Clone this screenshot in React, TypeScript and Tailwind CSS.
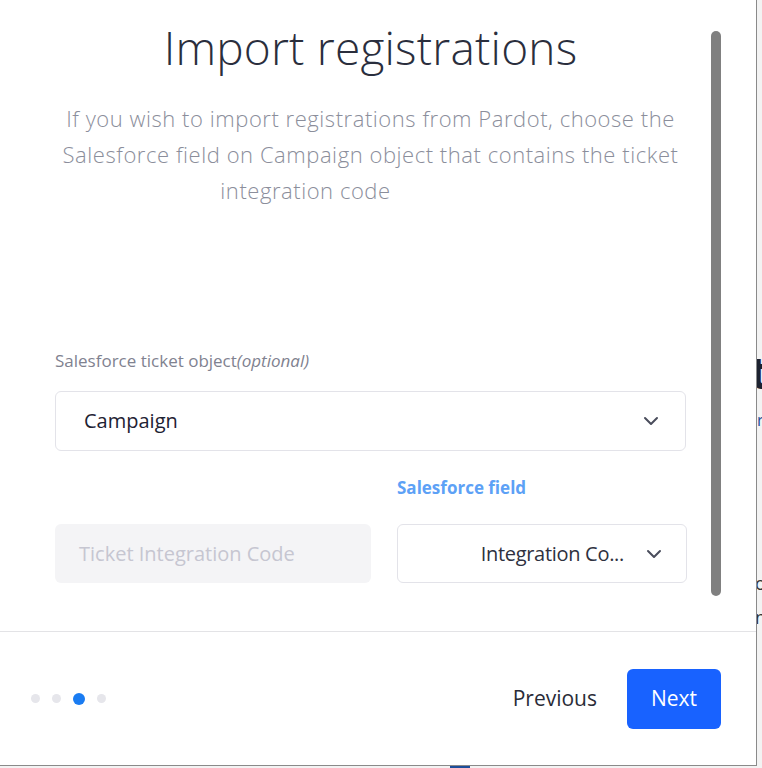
import { ChevronDown } from "lucide-react";

const font = { fontFamily: "'Open Sans', 'Noto Sans', sans-serif" };

function Dots() {
  return (
    <div className="flex items-center gap-[12px] pl-[31px]">
      <span className="h-[9px] w-[9px] rounded-full bg-[#e6e6eb]" />
      <span className="h-[9px] w-[9px] rounded-full bg-[#e6e6eb]" />
      <span className="h-[12px] w-[12px] rounded-full bg-[#1a7cf2]" />
      <span className="h-[9px] w-[9px] rounded-full bg-[#e6e6eb]" />
    </div>
  );
}

export default function App() {
  return (
    <div className="relative h-[768px] w-[762px] overflow-hidden bg-[#f3f3f3]" style={font}>
      {/* page behind the modal */}
      <div className="absolute left-[750px] top-[350px] text-[44px] font-bold leading-none text-[#1d2230]">t</div>
      <div className="absolute left-[757px] top-[412px] text-[16px] leading-none text-[#1d4e9a]">r</div>
      <div className="absolute left-[755px] top-[574px] text-[18px] leading-none text-[#333]">o</div>
      <div className="absolute left-[755px] top-[608px] text-[18px] leading-none text-[#333]">n</div>
      <div className="absolute left-[450px] top-[762px] h-[6px] w-[20px] bg-[#1d4e9a]" />

      <div className="relative flex h-[766px] w-[757px] flex-col border-b border-r border-[#8a8a8a] bg-white">
        {/* body */}
        <div className="relative flex-1 pl-[55px] pr-[70px] pt-[18px]">
          <h1 className="text-center text-[46px] font-light leading-[58px] tracking-[0.2px] text-[#2a2e3d]">
            Import registrations
          </h1>
          <div className="mt-[24px] text-center text-[22px] font-light leading-[36px] tracking-[0.55px] text-[#8b8e9b]">
            <p>If you wish to import registrations from Pardot, choose the</p>
            <p>Salesforce field on Campaign object that contains the ticket</p>
            <p className="mr-[130px]">integration code</p>
          </div>

          <div className="mt-[143px] text-[17px] leading-[20px] text-[#7f8290]">
            Salesforce ticket object<i>(optional)</i>
          </div>
          <div className="mt-[20px] flex h-[60px] items-center justify-between rounded-[6px] border border-[#e3e3e9] pl-[28px] pr-[22px]">
            <span className="text-[20px] text-[#1e2233]">Campaign</span>
            <ChevronDown className="h-[24px] w-[24px] text-[#4a4d5c]" strokeWidth={2} />
          </div>

          <div className="mt-[27px] grid grid-cols-[316px_290px] gap-x-[26px]">
            <div />
            <div className="text-[17px] font-bold leading-[20px] text-[#5da1f6]">Salesforce field</div>
          </div>

          <div className="mt-[26px] grid grid-cols-[316px_290px] gap-x-[26px]">
            <div className="flex h-[59px] items-center rounded-[6px] bg-[#f4f4f6] pl-[24px] text-[20px] text-[#c6c6d1]">
              Ticket Integration Code
            </div>
            <div className="flex h-[59px] items-center justify-end gap-[18px] rounded-[6px] border border-[#e3e3e9] pr-[20px]">
              <span className="text-[20px] tracking-[-0.3px] text-[#2e3140]">Integration Co...</span>
              <ChevronDown className="h-[24px] w-[24px] text-[#4a4d5c]" strokeWidth={2} />
            </div>
          </div>

          {/* scrollbar thumb */}
          <div className="absolute right-[35px] top-[31px] h-[565px] w-[10px] rounded-full bg-[#808080]" />
        </div>

        {/* footer */}
        <div className="flex h-[134px] items-center justify-between border-t border-[#e3e3e6] pr-[35px]">
          <Dots />
          <div className="flex items-center gap-[30px]">
            <button className="text-[21px] text-[#2a2c38]">Previous</button>
            <button className="h-[60px] w-[94px] rounded-[6px] bg-[#1862ff] text-[21px] text-white">Next</button>
          </div>
        </div>
      </div>
    </div>
  );
}
